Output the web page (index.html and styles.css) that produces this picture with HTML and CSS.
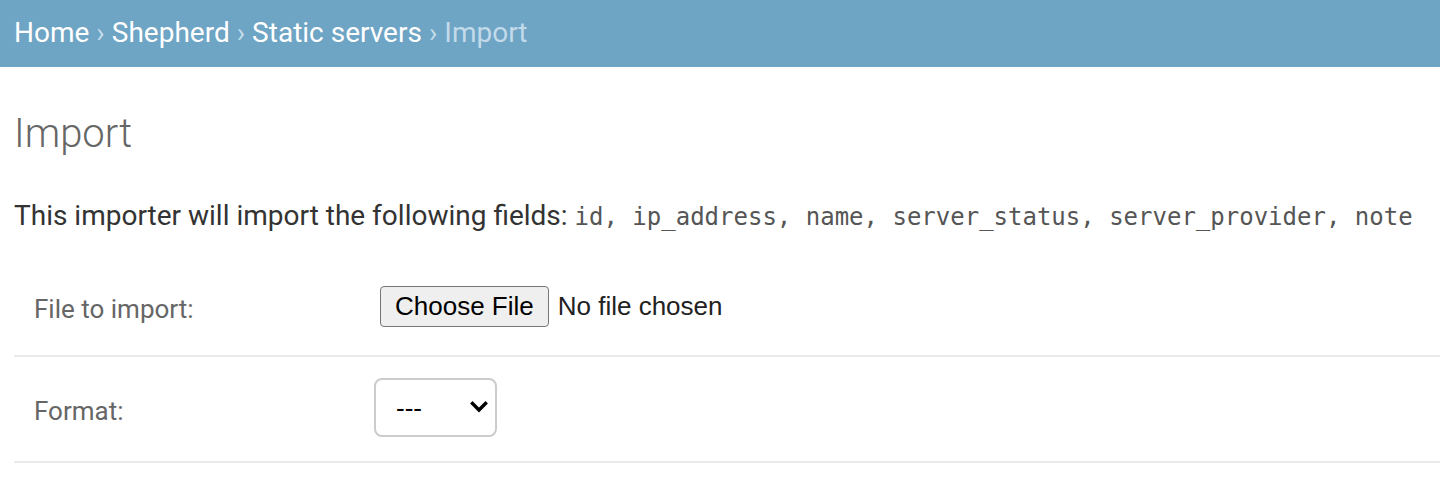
FILE: index.html
```html
<!DOCTYPE html>
<html lang="en">
<head>
<meta charset="utf-8">
<title>Import | Static servers</title>
<link rel="stylesheet" href="styles.css">
</head>
<body>
<nav class="breadcrumbs">
  <a href="#">Home</a><span class="sep">›</span><a href="#">Shepherd</a><span class="sep">›</span><a href="#">Static servers</a><span class="sep">›</span><span class="current">Import</span>
</nav>
<main class="content">
  <h1 class="title">Import</h1>
  <p class="intro">This importer will import the following fields: <code class="fields">id, ip_address, name, server_status, server_provider, note</code></p>
  <form class="import-form">
    <div class="form-row form-row--file">
      <label class="row-label" for="import_file">File to import:</label>
      <div class="file-field">
        <input class="file-input" type="file" id="import_file" name="import_file">
      </div>
    </div>
    <div class="form-row">
      <label class="row-label" for="input_format">Format:</label>
      <div class="select-wrap">
        <select class="format-select" id="input_format" name="input_format">
          <option value="">---</option>
          <option value="0">csv</option>
          <option value="1">xlsx</option>
          <option value="2">json</option>
        </select>
        <svg class="chevron" width="18" height="12" viewBox="0 0 18 12" aria-hidden="true"><path d="M2.5 2.5 L9 9 L15.5 2.5" fill="none" stroke="#000" stroke-width="3.4" stroke-linecap="square" stroke-linejoin="miter"/></svg>
      </div>
    </div>
  </form>
</main>
</body>
</html>
```
FILE: styles.css
```css
html, body {
  margin: 0;
  padding: 0;
  background: #fff;
}

body {
  font-family: Roboto, "Liberation Sans", Arial, sans-serif;
  color: #333;
}

.breadcrumbs {
  background: #6ea4c4;
  color: #c4dce8;
  font-size: 28px;
  line-height: 40px;
  padding: 13px 14px 14px;
  white-space: nowrap;
}

.breadcrumbs a {
  color: #fff;
  text-decoration: none;
}

.breadcrumbs .sep {
  color: #c4dce8;
  margin: 0 7px;
}

.breadcrumbs .current {
  color: #c2daea;
}

.content {
  padding: 0 0 0 14px;
}

.title {
  margin: 43px 0 0;
  font-size: 40px;
  line-height: 48px;
  font-weight: 300;
  color: #666;
}

.intro {
  margin: 38px 0 28px;
  font-size: 28px;
  line-height: 40px;
  color: #333;
}

.fields {
  font-family: "DejaVu Sans Mono", "Liberation Mono", monospace;
  font-size: 24px;
  color: #555;
}

.import-form {
  margin: 0;
}

.form-row {
  display: flex;
  align-items: center;
  padding: 21px 20px 24px;
  border-bottom: 2px solid #eaeaea;
}

.form-row--file {
  padding-top: 20px;
  padding-bottom: 28px;
}

.row-label {
  width: 320px;
  padding: 6px 20px 0 0;
  font-size: 26px;
  line-height: 36px;
  color: #666;
  flex-shrink: 0;
}

.file-field {
  display: flex;
  align-items: flex-start;
  height: 41px;
}

.file-input {
  font-family: "Liberation Sans", Arial, sans-serif;
  font-size: 26px;
  color: #222;
  margin: 0 0 0 6px;
  padding: 0;
  height: 41px;
  line-height: 41px;
}

.file-input::file-selector-button {
  font-family: "Liberation Sans", Arial, sans-serif;
  font-size: 26px;
  color: #000;
  height: 41px;
  padding: 0 14px;
  margin: 0 9px 0 0;
  background: #efefef;
  border: 1px solid #767676;
  border-radius: 4px;
}

.select-wrap {
  position: relative;
  width: 123px;
  height: 59px;
}

.format-select {
  appearance: none;
  -webkit-appearance: none;
  box-sizing: border-box;
  width: 123px;
  height: 59px;
  margin: 0;
  padding: 0 40px 0 20px;
  border: 2px solid #ccc;
  border-radius: 8px;
  background: #fff;
  font-family: "Liberation Sans", Arial, sans-serif;
  font-size: 26px;
  color: #000;
}

.chevron {
  position: absolute;
  right: 9px;
  top: 23px;
  pointer-events: none;
}
```
